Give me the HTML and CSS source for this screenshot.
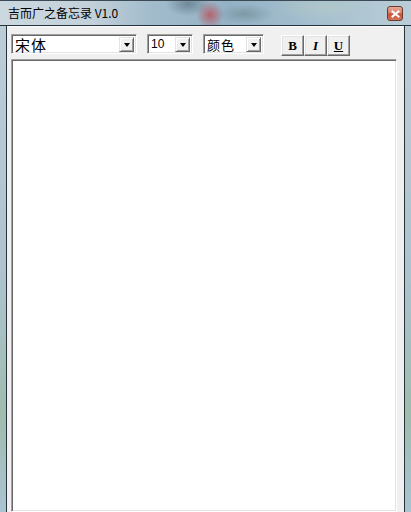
FILE: index.html
```html
<!DOCTYPE html>
<html lang="zh-CN">
<head>
<meta charset="utf-8">
<title>吉而广之备忘录 V1.0</title>
<link rel="stylesheet" href="styles.css">
</head>
<body>
<div class="window">
  <div class="titlebar">
    <span class="title">吉而广之备忘录 V1.0</span>
    <div class="close">
      <svg width="9" height="8" viewBox="0 0 9 8"><path d="M1.5 1.5 L7.5 6.5 M7.5 1.5 L1.5 6.5" stroke="#fff" stroke-width="2" stroke-linecap="square"/></svg>
    </div>
  </div>
  <div class="body">
    <div class="frame frame-left"></div>
    <div class="client">
      <div class="toolbar">
        <div class="combo combo-font">
          <span class="combo-text cjk">宋体</span>
          <span class="drop"><span class="tri"></span></span>
        </div>
        <div class="combo combo-size">
          <span class="combo-text num">10</span>
          <span class="drop"><span class="tri"></span></span>
        </div>
        <div class="combo combo-color">
          <span class="combo-text cjk small">颜色</span>
          <span class="drop"><span class="tri"></span></span>
        </div>
        <div class="btns">
          <button class="fmt b">B</button>
          <button class="fmt i">I</button>
          <button class="fmt u">U</button>
        </div>
      </div>
      <div class="editor"></div>
    </div>
    <div class="frame frame-right"></div>
  </div>
</div>
</body>
</html>
```
FILE: styles.css
```css
html, body {
  margin: 0;
  padding: 0;
  background: #b9cbd6;
}
.window {
  width: 411px;
  height: 512px;
  display: flex;
  flex-direction: column;
  overflow: hidden;
  font-family: "Noto Sans CJK SC", "Liberation Sans", sans-serif;
}
.titlebar {
  height: 26px;
  flex: none;
  display: flex;
  align-items: center;
  box-sizing: border-box;
  border-top: 1px solid #3b4a55;
  border-bottom: 1px solid #26323b;
  background:
    radial-gradient(ellipse 14px 14px at 210px 14px, rgba(185,80,90,0.8), rgba(185,80,90,0) 100%),
    radial-gradient(ellipse 22px 12px at 188px 3px, rgba(60,80,95,0.45), rgba(60,80,95,0) 100%),
    radial-gradient(ellipse 28px 10px at 245px 13px, rgba(95,120,125,0.45), rgba(95,120,125,0) 100%),
    radial-gradient(ellipse 50px 14px at 320px 6px, rgba(185,205,195,0.45), rgba(185,205,195,0) 100%),
    linear-gradient(90deg, #ccd8df 0px, #c3d1da 90px, #a2bccc 150px, #93b2c5 230px, #a6c0cf 320px, #bacdd7 411px);
}
.title {
  margin-left: 8px;
  font-size: 12px;
  line-height: 16px;
  color: #000;
}
.close {
  margin-left: auto;
  margin-right: 8px;
  width: 16px;
  height: 15px;
  box-sizing: border-box;
  border: 1px solid #6b3a30;
  border-radius: 3px;
  background: linear-gradient(180deg, #e6a897 0%, #d9806b 45%, #c65038 55%, #d5775a 100%);
  display: flex;
  align-items: center;
  justify-content: center;
  margin-top: 1px;
}
.body {
  flex: 1;
  display: flex;
  min-height: 0;
}
.frame {
  flex: none;
  background: linear-gradient(180deg, #bccdd8 0%, #aec3cf 50%, #9fbcae 80%, #a9c4d2 100%);
}
.frame-left {
  width: 6px;
  border-right: 1px solid #27333b;
}
.frame-right {
  width: 6px;
  border-left: 1px solid #27333b;
}
.client {
  flex: 1;
  background: #f0f0f0;
  display: flex;
  flex-direction: column;
  padding: 0 7px 0 4px;
  border-top: 1px solid #fbfbfb;
  min-width: 0;
}
.toolbar {
  display: flex;
  align-items: flex-start;
  padding-top: 7px;
  height: 32px;
  box-sizing: border-box;
  flex: none;
}
.combo {
  height: 20px;
  box-sizing: border-box;
  border-top: 1px solid #a0a0a0;
  border-left: 1px solid #a0a0a0;
  border-right: 1px solid #ffffff;
  border-bottom: 1px solid #ffffff;
  box-shadow: inset 1px 1px 0 #696969, inset -1px -1px 0 #e3e3e3;
  background: #fff;
  display: flex;
  align-items: center;
  padding: 1px 2px 1px 3px;
}
.combo-font { width: 126px; }
.combo-size { width: 46px; margin-left: 10px; }
.combo-color { width: 61px; margin-left: 10px; }
.combo-text {
  flex: 1;
  color: #000;
  white-space: nowrap;
  min-width: 0;
}
.cjk {
  font-family: "Noto Sans CJK SC", sans-serif;
  font-size: 15px;
  line-height: 17px;
  letter-spacing: 1px;
}
.cjk.small {
  font-size: 13px;
  letter-spacing: 1px;
}
.num {
  font-family: "Liberation Sans", sans-serif;
  font-size: 12px;
  line-height: 14px;
}
.drop {
  width: 15px;
  height: 15px;
  box-sizing: border-box;
  flex: none;
  background: #f0f0f0;
  border-top: 1px solid #e3e3e3;
  border-left: 1px solid #e3e3e3;
  border-right: 1px solid #696969;
  border-bottom: 1px solid #696969;
  box-shadow: inset 1px 1px 0 #fff, inset -1px -1px 0 #a0a0a0;
  display: flex;
  align-items: center;
  justify-content: center;
}
.tri {
  width: 0;
  height: 0;
  border-left: 3.5px solid transparent;
  border-right: 3.5px solid transparent;
  border-top: 4px solid #000;
  margin-top: 1px;
}
.btns {
  display: flex;
  margin-left: 17px;
  margin-top: 1px;
}
.fmt {
  width: 23px;
  height: 21px;
  margin: 0;
  padding: 0;
  box-sizing: border-box;
  background: #f0f0f0;
  border-top: 1px solid #ffffff;
  border-left: 1px solid #ffffff;
  border-right: 1px solid #696969;
  border-bottom: 1px solid #696969;
  box-shadow: inset -1px -1px 0 #a0a0a0, inset 1px 1px 0 #e3e3e3;
  font-family: "Liberation Serif", serif;
  font-weight: bold;
  font-size: 13px;
  line-height: 18px;
  color: #000;
}
.fmt.i { font-style: italic; }
.fmt.u { text-decoration: underline; }
.editor {
  flex: 1;
  background: #fff;
  box-sizing: border-box;
  border-top: 1px solid #a0a0a0;
  border-left: 1px solid #a0a0a0;
  border-right: 1px solid #fff;
  border-bottom: 1px solid #fff;
  box-shadow: inset 1px 1px 0 #696969, inset -1px -1px 0 #e3e3e3;
}
```
